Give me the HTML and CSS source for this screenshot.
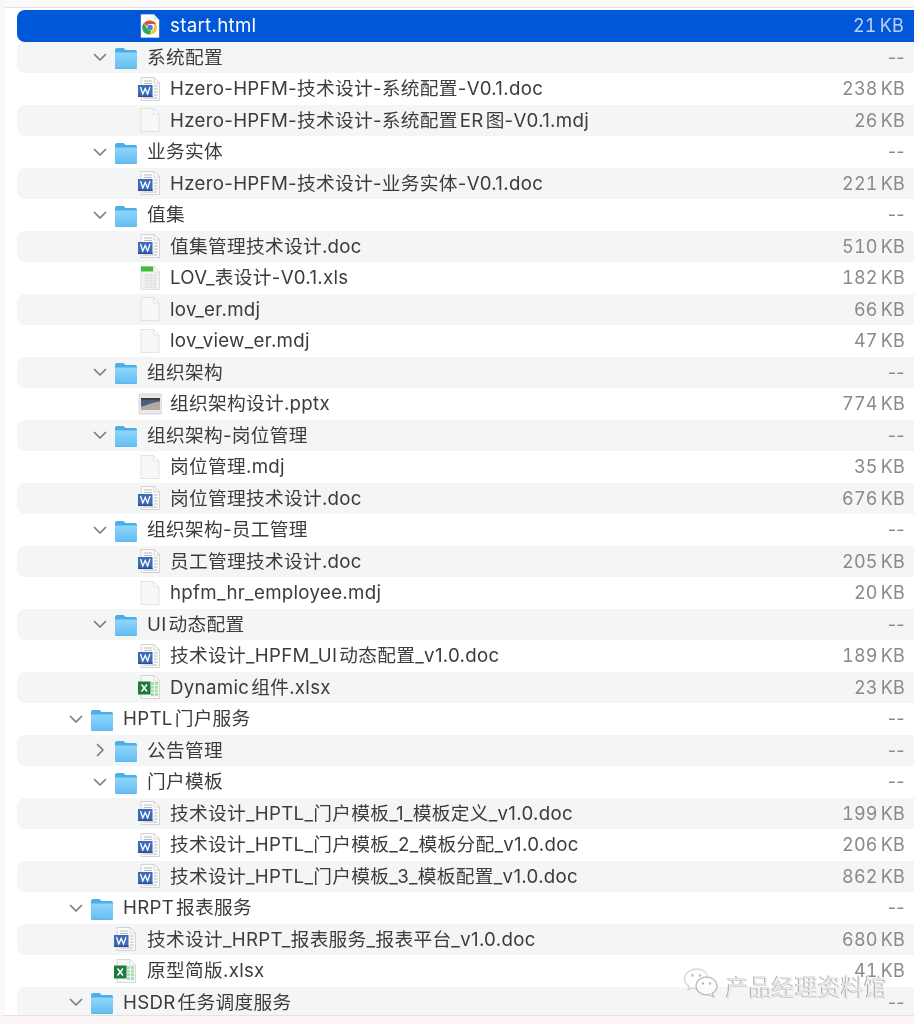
FILE: index.html
```html
<!DOCTYPE html>
<html lang="zh">
<head>
<meta charset="utf-8">
<title>Finder</title>
<link rel="stylesheet" href="styles.css">
</head>
<body>
<svg class="defs" width="0" height="0" aria-hidden="true">
  <defs>
    <linearGradient id="fb" x1="0" y1="0" x2="0" y2="1"><stop offset="0" stop-color="#8fd6fb"/><stop offset="1" stop-color="#62bdf2"/></linearGradient>
    <symbol id="chev-d" viewBox="0 0 16 16"><path d="M2.5 5.5 8 11l5.500-5.500" fill="none" stroke="#7c7c7c" stroke-width="1.700" stroke-linecap="round" stroke-linejoin="round"/></symbol>
    <symbol id="chev-r" viewBox="0 0 16 16"><path d="M5.500 2.500 11 8l-5.500 5.500" fill="none" stroke="#7c7c7c" stroke-width="1.700" stroke-linecap="round" stroke-linejoin="round"/></symbol>
    <symbol id="folder" viewBox="0 0 24 24">
      <path d="M1 5.500C1 3.800 1.800 3 3.200 3h5.300c1 0 1.500.4 2.100 1l.9 1H21c1.300 0 2 .8 2 2v3H1z" fill="#4cade8"/>
      <path d="M1 7.500h22V22c0 1.200-.8 2-2 2H3c-1.200 0-2-.8-2-2z" fill="url(#fb)"/>
      <path d="M1 23.300c.3.500 1 .7 2 .7h18c1 0 1.700-.2 2-.7" fill="none" stroke="#5aa9d8" stroke-width=".8"/>
    </symbol>
    <symbol id="page" viewBox="0 0 24 24">
      <path d="M3 .5h12.500L21 6v17.500H3z" fill="#f8f8f8" stroke="#dddddd" stroke-width=".8"/>
      <path d="M15.500.5V6H21z" fill="#fff" stroke="#dddddd" stroke-width=".8"/>
    </symbol>
    <symbol id="doc" viewBox="0 0 24 24">
      <path d="M3 .5h13L21.500 6v17.500H3z" fill="#fbfbfb" stroke="#c9c9c9" stroke-width=".8"/>
      <path d="M16 .5V6h5.500z" fill="#fff" stroke="#c9c9c9" stroke-width=".7"/>
      <path d="M6 4h8M6 6.500h8M16 9h3.500M16 12h3.500M16 15h3.500M16 18h3.500M5 21h14" stroke="#b4b4b4" stroke-width=".9"/>
      <rect x="0" y="8" width="14.500" height="12" fill="#3a6cbc"/>
      <rect x="0" y="18.500" width="14.500" height="1.500" fill="#264f96"/>
      <path d="M2.500 10 4.800 17 7.200 11.500 9.600 17 12 10" fill="none" stroke="#fff" stroke-width="1.300"/>
    </symbol>
    <symbol id="xls" viewBox="0 0 24 24">
      <path d="M3 .5h13L21.500 6v17.500H3z" fill="#f3f3f3" stroke="#d2d2d2" stroke-width=".7"/>
      <path d="M3 .5h12v5H3z" fill="#3fbe3a"/>
      <path d="M16 .5V6h5.500z" fill="#fff" stroke="#cfcfcf" stroke-width=".6"/>
      <path d="M5.500 9H19M5.500 12H19M5.500 15H19M5.500 18H19M5.500 21H19M9 8v14M13 8v14M16.500 8v14" stroke="#dcdcdc" stroke-width=".9"/>
    </symbol>
    <symbol id="xlsx" viewBox="0 0 24 24">
      <path d="M3 .5h13L21.500 6v17.500H3z" fill="#f7f7f7" stroke="#c9c9c9" stroke-width=".7"/>
      <path d="M16 .5V6h5.500z" fill="#fff" stroke="#c9c9c9" stroke-width=".6"/>
      <path d="M13 7h7v14h-7z" fill="#a6dcae"/>
      <path d="M13 10.500h7M13 14h7M13 17.500h7M16.500 7v14" stroke="#f6f6f6" stroke-width=".9"/>
      <rect x="0" y="6.500" width="12.500" height="13" fill="#1f7a42"/>
      <path d="M3.500 9.500 9 16.500M9 9.500l-5.500 7" stroke="#fff" stroke-width="1.500"/>
    </symbol>
    <symbol id="ppt" viewBox="0 0 24 24">
      <rect x="1" y="2" width="23" height="20" rx="1.500" fill="#e9e9e9" stroke="#c9c9c9" stroke-width=".7"/>
      <rect x="3" y="6" width="19" height="12" fill="#6a6d72"/>
      <path d="M3 6h19v4l-7 2-5 3-7 1z" fill="#4a6078"/>
      <path d="M3 18v-3.500c5-.5 9-4 19-5V18z" fill="#b0aaa2"/>
      <path d="M3 6h19v1.800H3z" fill="#3a3b40"/>
    </symbol>
    <symbol id="chrome" viewBox="0 0 24 24">
      <path d="M3 .5h13L21 6v17.500H3z" fill="#fff" stroke="#d8d8d8" stroke-width=".5"/>
      <path d="M16 .5V6h5z" fill="#e9e9e9"/>
      <path d="M12 6.500a7 7 0 0 1 6.060 3.500H12a3.500 3.500 0 0 0-3.300 2.300L5.900 9A7 7 0 0 1 12 6.500z" fill="#e2483c"/>
      <path d="M18.060 10A7 7 0 0 1 12 20.500l3-5.200a3.500 3.500 0 0 0 0-5.300z" fill="#f6c52e"/>
      <path d="M12 20.500A7 7 0 0 1 5.900 9l3 5.200a3.500 3.500 0 0 0 4.500 1.900z" fill="#33a852"/>
      <circle cx="12" cy="13.500" r="2.800" fill="#3f84ea"/>
    </symbol>
    <symbol id="wechat" viewBox="0 0 36 32">
      <path d="M13.500 2C7 2 1.500 6.300 1.500 11.800c0 3.100 1.700 5.700 4.500 7.600L5 23l4.200-2.200c1.300.4 2.700.6 4.300.6" fill="none" stroke="#d6d6d6" stroke-width="1.300"/>
      <path d="M13.500 2c5.700 0 10.600 3.300 11.700 7.800" fill="none" stroke="#d6d6d6" stroke-width="1.300"/>
      <ellipse cx="23.500" cy="19" rx="10.500" ry="9" fill="#fff" fill-opacity=".7" stroke="#bdbdbd" stroke-width="1.300"/>
      <path d="M29 26l2 4-5-2.200" fill="#fff" stroke="#bdbdbd" stroke-width="1.200"/>
      <circle cx="9.500" cy="8.500" r="1.400" fill="#c8c8c8"/><circle cx="17" cy="8.500" r="1.400" fill="#c8c8c8"/>
      <circle cx="20" cy="16.500" r="1.200" fill="#b5b5b5"/><circle cx="27" cy="16.500" r="1.200" fill="#b5b5b5"/>
    </symbol>
  </defs>
</svg>

<main class="window">
  <div class="top-bar"></div>
  <div class="list">
    <div class="row sel l2"><span class="chev"></span><svg class="ico"><use href="#chrome"/></svg><span class="name">start.html</span><span class="size">21 KB</span></div>
    <div class="row l1"><svg class="chev"><use href="#chev-d"/></svg><svg class="ico"><use href="#folder"/></svg><span class="name">系统配置</span><span class="size dash">--</span></div>
    <div class="row l2"><span class="chev"></span><svg class="ico"><use href="#doc"/></svg><span class="name">Hzero-HPFM-技术设计-系统配置-V0.1.doc</span><span class="size">238 KB</span></div>
    <div class="row l2"><span class="chev"></span><svg class="ico"><use href="#page"/></svg><span class="name">Hzero-HPFM-技术设计-系统配置&#8202;ER&#8202;图-V0.1.mdj</span><span class="size">26 KB</span></div>
    <div class="row l1"><svg class="chev"><use href="#chev-d"/></svg><svg class="ico"><use href="#folder"/></svg><span class="name">业务实体</span><span class="size dash">--</span></div>
    <div class="row l2"><span class="chev"></span><svg class="ico"><use href="#doc"/></svg><span class="name">Hzero-HPFM-技术设计-业务实体-V0.1.doc</span><span class="size">221 KB</span></div>
    <div class="row l1"><svg class="chev"><use href="#chev-d"/></svg><svg class="ico"><use href="#folder"/></svg><span class="name">值集</span><span class="size dash">--</span></div>
    <div class="row l2"><span class="chev"></span><svg class="ico"><use href="#doc"/></svg><span class="name">值集管理技术设计.doc</span><span class="size">510 KB</span></div>
    <div class="row l2"><span class="chev"></span><svg class="ico"><use href="#xls"/></svg><span class="name">LOV_表设计-V0.1.xls</span><span class="size">182 KB</span></div>
    <div class="row l2"><span class="chev"></span><svg class="ico"><use href="#page"/></svg><span class="name">lov_er.mdj</span><span class="size">66 KB</span></div>
    <div class="row l2"><span class="chev"></span><svg class="ico"><use href="#page"/></svg><span class="name">lov_view_er.mdj</span><span class="size">47 KB</span></div>
    <div class="row l1"><svg class="chev"><use href="#chev-d"/></svg><svg class="ico"><use href="#folder"/></svg><span class="name">组织架构</span><span class="size dash">--</span></div>
    <div class="row l2"><span class="chev"></span><svg class="ico"><use href="#ppt"/></svg><span class="name">组织架构设计.pptx</span><span class="size">774 KB</span></div>
    <div class="row l1"><svg class="chev"><use href="#chev-d"/></svg><svg class="ico"><use href="#folder"/></svg><span class="name">组织架构-岗位管理</span><span class="size dash">--</span></div>
    <div class="row l2"><span class="chev"></span><svg class="ico"><use href="#page"/></svg><span class="name">岗位管理.mdj</span><span class="size">35 KB</span></div>
    <div class="row l2"><span class="chev"></span><svg class="ico"><use href="#doc"/></svg><span class="name">岗位管理技术设计.doc</span><span class="size">676 KB</span></div>
    <div class="row l1"><svg class="chev"><use href="#chev-d"/></svg><svg class="ico"><use href="#folder"/></svg><span class="name">组织架构-员工管理</span><span class="size dash">--</span></div>
    <div class="row l2"><span class="chev"></span><svg class="ico"><use href="#doc"/></svg><span class="name">员工管理技术设计.doc</span><span class="size">205 KB</span></div>
    <div class="row l2"><span class="chev"></span><svg class="ico"><use href="#page"/></svg><span class="name">hpfm_hr_employee.mdj</span><span class="size">20 KB</span></div>
    <div class="row l1"><svg class="chev"><use href="#chev-d"/></svg><svg class="ico"><use href="#folder"/></svg><span class="name">UI&#8202;动态配置</span><span class="size dash">--</span></div>
    <div class="row l2"><span class="chev"></span><svg class="ico"><use href="#doc"/></svg><span class="name">技术设计_HPFM_UI&#8202;动态配置_v1.0.doc</span><span class="size">189 KB</span></div>
    <div class="row l2"><span class="chev"></span><svg class="ico"><use href="#xlsx"/></svg><span class="name">Dynamic&#8202;组件.xlsx</span><span class="size">23 KB</span></div>
    <div class="row l0"><svg class="chev"><use href="#chev-d"/></svg><svg class="ico"><use href="#folder"/></svg><span class="name">HPTL&#8202;门户服务</span><span class="size dash">--</span></div>
    <div class="row l1"><svg class="chev"><use href="#chev-r"/></svg><svg class="ico"><use href="#folder"/></svg><span class="name">公告管理</span><span class="size dash">--</span></div>
    <div class="row l1"><svg class="chev"><use href="#chev-d"/></svg><svg class="ico"><use href="#folder"/></svg><span class="name">门户模板</span><span class="size dash">--</span></div>
    <div class="row l2"><span class="chev"></span><svg class="ico"><use href="#doc"/></svg><span class="name">技术设计_HPTL_门户模板_1_模板定义_v1.0.doc</span><span class="size">199 KB</span></div>
    <div class="row l2"><span class="chev"></span><svg class="ico"><use href="#doc"/></svg><span class="name">技术设计_HPTL_门户模板_2_模板分配_v1.0.doc</span><span class="size">206 KB</span></div>
    <div class="row l2"><span class="chev"></span><svg class="ico"><use href="#doc"/></svg><span class="name">技术设计_HPTL_门户模板_3_模板配置_v1.0.doc</span><span class="size">862 KB</span></div>
    <div class="row l0"><svg class="chev"><use href="#chev-d"/></svg><svg class="ico"><use href="#folder"/></svg><span class="name">HRPT&#8202;报表服务</span><span class="size dash">--</span></div>
    <div class="row l1"><span class="chev"></span><svg class="ico"><use href="#doc"/></svg><span class="name">技术设计_HRPT_报表服务_报表平台_v1.0.doc</span><span class="size">680 KB</span></div>
    <div class="row l1"><span class="chev"></span><svg class="ico"><use href="#xlsx"/></svg><span class="name">原型简版.xlsx</span><span class="size">41 KB</span></div>
    <div class="row l0"><svg class="chev"><use href="#chev-d"/></svg><svg class="ico"><use href="#folder"/></svg><span class="name">HSDR&#8202;任务调度服务</span><span class="size dash">--</span></div>
  </div>
  <div class="watermark"><svg class="wm-ico"><use href="#wechat"/></svg><span class="wm-text">产品经理资料馆</span></div>
</main>
</body>
</html>
```

FILE: styles.css
```css
* { box-sizing: border-box; }
html, body { margin: 0; padding: 0; }
body {
  width: 914px;
  height: 1024px;
  overflow: hidden;
  background: #fbf5f6;
  font-family: Inter, "Noto Sans CJK SC", sans-serif;
}
.defs { position: absolute; }
.window {
  position: relative;
  height: 1016px;
  background: #fff;
  border-left: 5px solid #fbf7f8;
  border-bottom: 1px solid #e6e0e1;
  overflow: hidden;
  filter: blur(0.35px);
}
.top-bar {
  height: 8px;
  margin-left: -5px;
  background: #fafafa;
  border-bottom: 1px solid #e4e4e4;
}
.list {
  margin-top: 2px;
  margin-left: 12px;
}
.row {
  height: 31.5px;
  display: flex;
  align-items: center;
  color: #3c3c3c;
  font-size: 18.7px;
  line-height: 30px;
  border-radius: 8px 0 0 8px;
}
.row:nth-child(even) { background: #f4f5f5; }
.row.sel { background: #0058d8; color: #fff; }
.l0 { padding-left: 51px; }
.l1 { padding-left: 75px; }
.l2 { padding-left: 99px; }
.l2 .ico { margin-right: 8px; }
.chev { width: 16px; height: 16px; flex: none; margin-right: 6px; }
.ico { width: 24px; height: 24px; flex: none; margin-right: 9px; }
.name { flex: 1; white-space: nowrap; letter-spacing: 0.3px; padding-top: 1px; }
.size {
  padding-top: 1px;
  padding-right: 9px;
  color: #8a8a8a;
  font-size: 18px;
  font-variant-numeric: tabular-nums;
  word-spacing: -2px;
  letter-spacing: 0.2px;
}
.size.dash { font-variant-numeric: normal; letter-spacing: 0.4px; }
.sel .size { color: #b9d2f6; padding-right: 10px; }
.watermark {
  position: absolute;
  left: 678px;
  top: 966px;
  display: flex;
  align-items: center;
  gap: 7px;
}
.wm-ico { width: 36px; height: 32px; }
.wm-text {
  font-size: 23px;
  color: rgba(255, 255, 255, 0.75);
  text-shadow: -1px 0 0 #a9a9a9, 0 1px 0 rgba(170, 170, 170, 0.5);
  white-space: nowrap;
  position: relative;
  top: 2px;
}
```
